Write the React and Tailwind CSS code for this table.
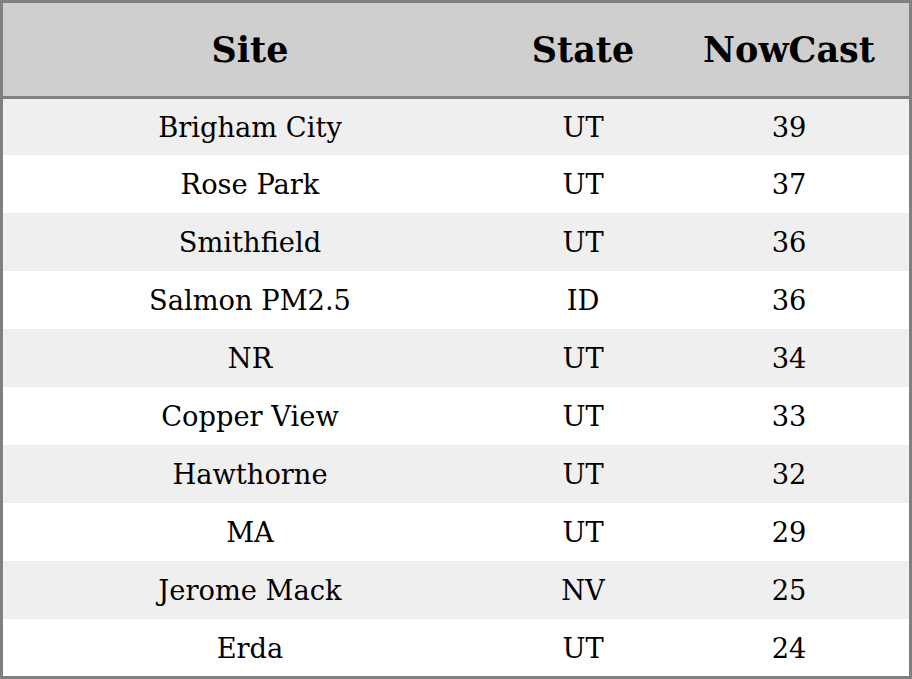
import React from 'react';

const rows = [
  { site: 'Brigham City', state: 'UT', nowcast: 39, h: 'h-[56px]' },
  { site: 'Rose Park', state: 'UT', nowcast: 37, h: 'h-[58px]' },
  { site: 'Smithfield', state: 'UT', nowcast: 36, h: 'h-[58px]' },
  { site: 'Salmon PM2.5', state: 'ID', nowcast: 36, h: 'h-[58px]' },
  { site: 'NR', state: 'UT', nowcast: 34, h: 'h-[58px]' },
  { site: 'Copper View', state: 'UT', nowcast: 33, h: 'h-[58px]' },
  { site: 'Hawthorne', state: 'UT', nowcast: 32, h: 'h-[58px]' },
  { site: 'MA', state: 'UT', nowcast: 29, h: 'h-[58px]' },
  { site: 'Jerome Mack', state: 'NV', nowcast: 25, h: 'h-[58px]' },
  { site: 'Erda', state: 'UT', nowcast: 24, h: 'h-[57px]' },
];

export default function App() {
  return (
    <div className="w-[912px] h-[679px] border-[3px] border-[#808080] bg-white font-['DejaVu_Serif',serif] text-black">
      <div className="grid h-[96px] grid-cols-[494px_172px_240px] items-center border-b-[3px] border-[#808080] bg-[#cfcfcf] text-[35px] leading-none font-bold">
        <div className="text-center">Site</div>
        <div className="text-center">State</div>
        <div className="text-center">NowCast</div>
      </div>
      {rows.map((r, i) => (
        <div
          key={r.site}
          className={`grid grid-cols-[494px_172px_240px] items-center pt-[2px] text-[27.3px] leading-none ${r.h} ${i % 2 === 0 ? 'bg-[#efefef]' : 'bg-white'}`}
        >
          <div className="text-center">{r.site}</div>
          <div className="text-center">{r.state}</div>
          <div className="text-center">{r.nowcast}</div>
        </div>
      ))}
    </div>
  );
}
